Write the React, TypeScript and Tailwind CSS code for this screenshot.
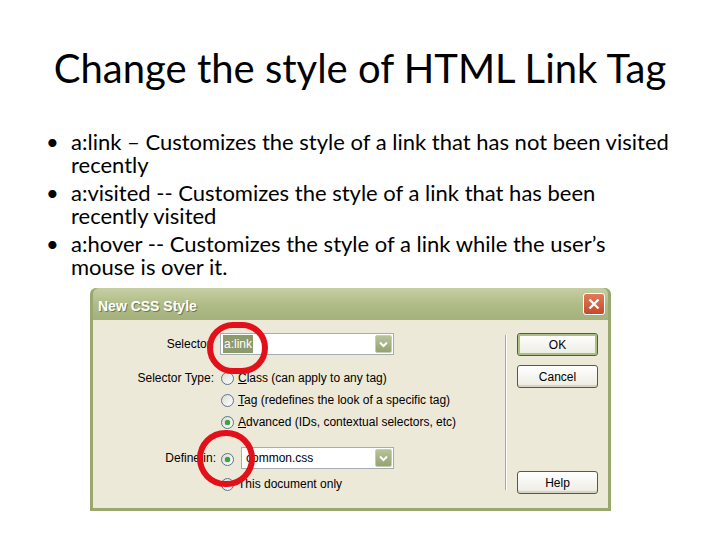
import React from "react";

const slideFont = { fontFamily: "Lato, 'Open Sans', sans-serif" };
const dlgFont = { fontFamily: "'Liberation Sans', Arial, sans-serif" };

function Radio({ checked }: { checked?: boolean }) {
  return (
    <span className="relative inline-flex h-[13px] w-[13px] shrink-0 items-center justify-center rounded-full border border-[#5a7394] bg-gradient-to-br from-[#dcdcd6] to-white">
      {checked && <span className="h-[5px] w-[5px] rounded-full bg-[#3aa53a] shadow-[0_0_1px_#2d7a2d]" />}
    </span>
  );
}

function DropBtn() {
  return (
    <span className="flex h-[18px] w-[17px] items-center justify-center rounded-[2px] border border-[#c7cfb3] bg-gradient-to-b from-[#b7c299] to-[#94a46f]">
      <svg width="9" height="7" viewBox="0 0 9 7">
        <path d="M1 1.5 L4.5 5 L8 1.5" stroke="white" strokeWidth="2" fill="none" />
      </svg>
    </span>
  );
}

function XPButton({ label, def }: { label: string; def?: boolean }) {
  return (
    <div
      className={
        "flex h-[23px] w-[81px] items-center justify-center rounded-[3px] border border-[#4d6234] bg-gradient-to-b from-white to-[#ecebe2] text-[12px] text-black " +
        (def ? "shadow-[inset_0_0_0_2px_#aac082]" : "shadow-[inset_0_-2px_0_#d7d4c6]")
      }
    >
      {label}
    </div>
  );
}

export default function App() {
  return (
    <div className="relative h-[540px] w-[720px] overflow-hidden bg-white text-black">
      <div
        className="pt-[42px] text-center text-[40px] leading-[53px] text-black"
        style={slideFont}
      >
        Change the style of HTML Link Tag
      </div>

      <div className="mt-[35px] text-[22px] leading-[23px]" style={slideFont}>
        {[
          ["a:link – Customizes the style of a link that has not been visited", "recently"],
          ["a:visited -- Customizes the style of a link that has been", "recently visited"],
          ["a:hover -- Customizes the style of a link while the user’s", "mouse is over it."],
        ].map((b, i) => (
          <div key={i} className="mb-[5px] flex">
            <span className="w-[71px] pl-[46px]">•</span>
            <div>
              <div className="whitespace-nowrap">{b[0]}</div>
              <div className="whitespace-nowrap">{b[1]}</div>
            </div>
          </div>
        ))}
      </div>

      {/* Dialog */}
      <div
        className="absolute left-[90px] top-[288px] flex h-[223px] w-[521px] flex-col rounded-t-[6px] border-x-[3px] border-b-[3px] border-[#9aa870] bg-[#9aa870]"
        style={dlgFont}
      >
        <div className="flex h-[32px] items-center justify-between rounded-t-[6px] bg-gradient-to-b from-[#c6cfa4] via-[#b0bc88] to-[#a4b17c] pl-[5px] pr-[3px]">
          <span
            className="pt-[4px] text-[14px] font-bold text-white"
            style={{ fontFamily: "'Liberation Sans', sans-serif", textShadow: "1px 1px 0 #6f7c4c" }}
          >
            New CSS Style
          </span>
          <span className="flex h-[22px] w-[22px] items-center justify-center rounded-[3px] border border-white bg-gradient-to-b from-[#e07a5a] to-[#c44a2a]">
            <svg width="12" height="12" viewBox="0 0 12 12">
              <path d="M1.5 1.5 L10.5 10.5 M10.5 1.5 L1.5 10.5" stroke="white" strokeWidth="2.4" />
            </svg>
          </span>
        </div>

        <div className="flex flex-1 bg-[#ece9d8] text-[12px]">
          {/* Left column */}
          <div className="flex w-[412px] flex-col pt-[13px]">
            <div className="flex h-[22px] items-center">
              <span className="w-[121px] text-right">Selector:</span>
              <div className="ml-[6px] flex h-[22px] w-[174px] items-center justify-between border border-[#a5acb2] bg-white pl-[2px] pr-[1px]">
                <span className="bg-[#8c9a6c] px-[1px] text-white">a:link</span>
                <DropBtn />
              </div>
            </div>

            <div className="mt-[12px] flex h-[22px] items-center">
              <span className="w-[121px] text-right">Selector Type:</span>
              <span className="ml-[7px] flex items-center gap-[4px]">
                <Radio />
                <span><u>C</u>lass (can apply to any tag)</span>
              </span>
            </div>
            <div className="flex h-[22px] items-center pl-[128px]">
              <span className="flex items-center gap-[4px]">
                <Radio />
                <span><u>T</u>ag (redefines the look of a specific tag)</span>
              </span>
            </div>
            <div className="flex h-[22px] items-center pl-[128px]">
              <span className="flex items-center gap-[4px]">
                <Radio checked />
                <span><u>A</u>dvanced (IDs, contextual selectors, etc)</span>
              </span>
            </div>

            <div className="mt-[14px] flex h-[22px] items-center">
              <span className="w-[123px] text-right">Define in:</span>
              <span className="ml-[5px]">
                <Radio checked />
              </span>
              <div className="ml-[7px] flex h-[22px] w-[153px] items-center justify-between border border-[#a5acb2] bg-white pl-[4px] pr-[1px]">
                <span>common.css</span>
                <DropBtn />
              </div>
            </div>
            <div className="mt-[4px] flex h-[22px] items-center pl-[128px]">
              <span className="flex items-center gap-[4px]">
                <Radio />
                <span>This document only</span>
              </span>
            </div>
          </div>

          {/* Separator */}
          <div className="mt-[15px] h-[155px] w-[2px] border-l border-r border-l-[#aca899] border-r-white" />

          {/* Buttons */}
          <div className="ml-[10px] flex flex-col pt-[13px]">
            <XPButton label="OK" def />
            <div className="mt-[9px]">
              <XPButton label="Cancel" />
            </div>
            <div className="mt-[83px]">
              <XPButton label="Help" />
            </div>
          </div>
        </div>
      </div>

      {/* Red circles */}
      <div className="absolute left-[207px] top-[322px] h-[52px] w-[61px] rounded-full border-[6px] border-[#e3101a]" />
      <div className="absolute left-[197px] top-[430px] h-[57px] w-[58px] rounded-full border-[6px] border-[#e3101a]" />
    </div>
  );
}
